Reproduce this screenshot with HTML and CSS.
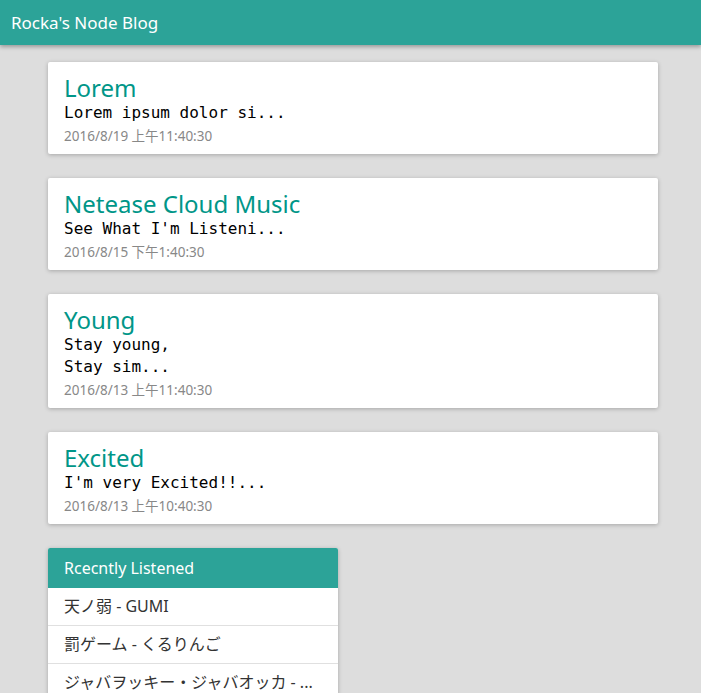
FILE: index.html
```html
<!DOCTYPE html>
<html>
<head>
<meta charset="utf-8">
<link rel="stylesheet" href="styles.css">
</head>
<body>
<header class="topbar"><span class="brand">Rocka's Node Blog</span></header>
<main class="content">
  <article class="card">
    <h2 class="card-title">Lorem</h2>
    <pre class="card-body">Lorem ipsum dolor si...</pre>
    <div class="card-date">2016/8/19 上午11:40:30</div>
  </article>
  <article class="card">
    <h2 class="card-title">Netease Cloud Music</h2>
    <pre class="card-body">See What I'm Listeni...</pre>
    <div class="card-date">2016/8/15 下午1:40:30</div>
  </article>
  <article class="card">
    <h2 class="card-title">Young</h2>
    <pre class="card-body">Stay young,
Stay sim...</pre>
    <div class="card-date">2016/8/13 上午11:40:30</div>
  </article>
  <article class="card">
    <h2 class="card-title">Excited</h2>
    <pre class="card-body">I'm very Excited!!...</pre>
    <div class="card-date">2016/8/13 上午10:40:30</div>
  </article>
  <section class="panel">
    <div class="panel-head">Rcecntly Listened</div>
    <ul class="panel-list">
      <li>天ノ弱 - GUMI</li>
      <li>罰ゲーム - くるりんご</li>
      <li>ジャバヲッキー・ジャバオッカ - ...</li>
    </ul>
  </section>
</main>
</body>
</html>
```
FILE: styles.css
```css
html, body { margin: 0; padding: 0; }
body {
  background: #dddddd;
  font-family: "Noto Sans", "Noto Sans CJK JP", sans-serif;
  overflow: hidden;
}
.topbar {
  height: 45px;
  background: #2ca398;
  box-shadow: 0 2px 4px rgba(0,0,0,0.3);
  display: flex;
  align-items: center;
  padding-left: 11px;
}
.brand { color: #fff; font-size: 17px; }
.content {
  width: 610px;
  margin-left: 48px;
  padding-top: 17px;
  display: flex;
  flex-direction: column;
  gap: 24px;
}
.card {
  background: #fff;
  border-radius: 2px;
  box-shadow: 0 1px 4px rgba(0,0,0,0.25);
  padding: 12px 16px 6px;
}
.card-title {
  margin: 0;
  font-weight: normal;
  font-size: 24px;
  line-height: 28px;
  color: #009688;
}
.card-body {
  margin: 0;
  font-family: "DejaVu Sans Mono", monospace;
  font-size: 16px;
  line-height: 22px;
  color: #000;
}
.card-date {
  font-size: 13.5px;
  line-height: 24px;
  color: #888;
}
.panel {
  width: 290px;
  background: #fff;
  border-radius: 2px;
  box-shadow: 0 1px 4px rgba(0,0,0,0.25);
}
.panel-head {
  height: 40px;
  background: #2ca398;
  color: #fff;
  font-size: 16px;
  line-height: 40px;
  padding-left: 16px;
  border-radius: 2px 2px 0 0;
}
.panel-list { list-style: none; margin: 0; padding: 0; }
.panel-list li {
  height: 37px;
  line-height: 37px;
  padding-left: 16px;
  font-size: 16px;
  color: #333;
  border-bottom: 1px solid #e0e0e0;
  white-space: nowrap;
}
```
